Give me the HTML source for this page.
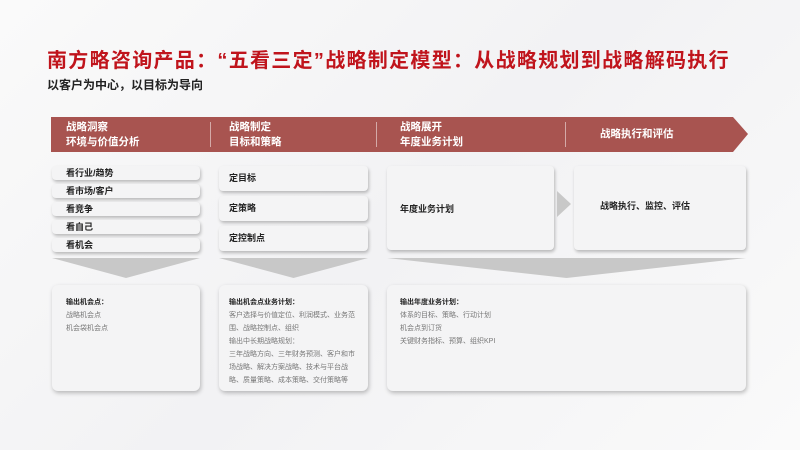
<!DOCTYPE html>
<html><head><meta charset="utf-8"><style>
*{margin:0;padding:0;box-sizing:border-box}
body{width:800px;height:450px;overflow:hidden;position:relative;font-family:"Liberation Sans","Noto Sans CJK SC",sans-serif;background:linear-gradient(135deg,#fafafa 0%,#f2f2f4 50%,#fafafa 100%)}
.t{position:absolute;left:47px;top:44px;font-size:20px;letter-spacing:1.3px;font-weight:bold;color:#c0141c;white-space:nowrap}
.s{position:absolute;left:47px;top:76px;font-size:12px;font-weight:bold;color:#222}
.banner{position:absolute;left:51px;top:117px;width:697px;height:35px;background:#a85450;clip-path:polygon(0 0,682px 0,697px 17px,682px 35px,0 35px)}
.bt{position:absolute;color:#fff;font-size:10.5px;font-weight:bold;line-height:15px}
.dv{position:absolute;top:122px;width:1px;height:25px;background:rgba(255,255,255,.5)}
.b{position:absolute;background:#f4f4f5;border-radius:4px;box-shadow:1px 2px 3px rgba(0,0,0,.25);font-size:9px;font-weight:bold;color:#222}
.sm{height:14px;left:52px;width:148px;padding-left:14px;line-height:14px}
.md{left:219px;width:149px;height:25px;padding-left:10px;line-height:25px}
.chev{position:absolute;background:#c8c8c8}
.o{position:absolute;top:285px;height:106px;background:#f4f4f5;border-radius:6px;box-shadow:1px 2px 4px rgba(0,0,0,.25);font-size:7px;color:#777;line-height:13px;padding:11px 14px}
.o b{color:#222}
</style></head><body>
<div class="t">南方略咨询产品：“五看三定”战略制定模型：从战略规划到战略解码执行</div>
<div class="s">以客户为中心，以目标为导向</div>
<div class="banner"></div>
<div class="bt" style="left:66px;top:120px">战略洞察<br>环境与价值分析</div>
<div class="bt" style="left:229px;top:120px">战略制定<br>目标和策略</div>
<div class="bt" style="left:400px;top:120px">战略展开<br>年度业务计划</div>
<div class="bt" style="left:600px;top:127px">战略执行和评估</div>
<div class="dv" style="left:210px"></div><div class="dv" style="left:376px"></div><div class="dv" style="left:565px"></div>
<div class="b sm" style="top:166px">看行业/趋势</div>
<div class="b sm" style="top:184px">看市场/客户</div>
<div class="b sm" style="top:202px">看竞争</div>
<div class="b sm" style="top:220px">看自己</div>
<div class="b sm" style="top:238px">看机会</div>
<div class="b md" style="top:166px">定目标</div>
<div class="b md" style="top:196px">定策略</div>
<div class="b md" style="top:226px">定控制点</div>
<div class="b" style="left:387px;top:166px;width:167px;height:84px;padding:36px 0 0 13px">年度业务计划</div>
<div class="chev" style="left:557px;top:191px;width:14px;height:26px;clip-path:polygon(0 0,100% 50%,0 100%)"></div>
<div class="b" style="left:574px;top:166px;width:172px;height:84px;padding:33px 0 0 26px">战略执行、监控、评估</div>
<div class="chev" style="left:52px;top:258px;width:148px;height:20px;clip-path:polygon(0 0,100% 0,50% 100%)"></div>
<div class="chev" style="left:219px;top:258px;width:149px;height:20px;clip-path:polygon(0 0,100% 0,50% 100%)"></div>
<div class="chev" style="left:387px;top:258px;width:359px;height:20px;clip-path:polygon(0 0,100% 0,50% 100%)"></div>
<div class="o" style="left:52px;width:148px"><b>输出机会点：</b><br>战略机会点<br>机会袋机会点</div>
<div class="o" style="left:219px;width:149px;padding:11px 10px"><b>输出机会点业务计划：</b><br>客户选择与价值定位、利润模式、业务范围、战略控制点、组织<br>输出中长期战略规划：<br>三年战略方向、三年财务预测、客户和市场战略、解决方案战略、技术与平台战略、质量策略、成本策略、交付策略等</div>
<div class="o" style="left:387px;width:359px;padding:11px 13px"><b>输出年度业务计划：</b><br>体系的目标、策略、行动计划<br>机会点到订货<br>关键财务指标、预算、组织KPI</div>
</body></html>
